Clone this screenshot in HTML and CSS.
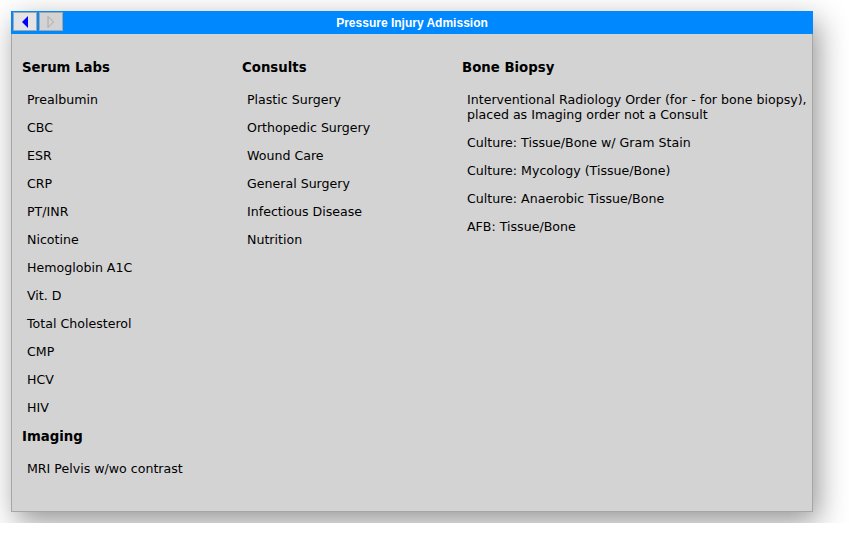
FILE: index.html
```html
<!DOCTYPE html>
<html>
<head>
<meta charset="utf-8">
<link rel="stylesheet" href="styles.css">
</head>
<body>
<div class="window">
  <div class="titlebar">
    <div class="navs">
      <button class="nav back"><svg width="8" height="12" viewBox="0 0 8 12"><path d="M7 0 L1 6 L7 12 Z" fill="#0000ff"/></svg></button>
      <button class="nav fwd"><svg width="8" height="12" viewBox="0 0 8 12"><path d="M1 0.5 L6.5 6 L1 11.5 Z" fill="none" stroke="#a8a8a8" stroke-width="1"/></svg></button>
    </div>
    <div class="title">Pressure Injury Admission</div>
  </div>
  <div class="content">
    <div class="col">
      <h2>Serum Labs</h2>
      <ul>
        <li>Prealbumin</li><li>CBC</li><li>ESR</li><li>CRP</li><li>PT/INR</li><li>Nicotine</li><li>Hemoglobin A1C</li><li>Vit. D</li><li>Total Cholesterol</li><li>CMP</li><li>HCV</li><li>HIV</li>
      </ul>
      <h2 class="sub">Imaging</h2>
      <ul>
        <li>MRI Pelvis w/wo contrast</li>
      </ul>
    </div>
    <div class="col">
      <h2>Consults</h2>
      <ul>
        <li>Plastic Surgery</li><li>Orthopedic Surgery</li><li>Wound Care</li><li>General Surgery</li><li>Infectious Disease</li><li>Nutrition</li>
      </ul>
    </div>
    <div class="col wide">
      <h2>Bone Biopsy</h2>
      <ul>
        <li>Interventional Radiology Order (for - for bone biopsy), placed as Imaging order not a Consult</li>
        <li>Culture: Tissue/Bone w/ Gram Stain</li>
        <li>Culture: Mycology (Tissue/Bone)</li>
        <li>Culture: Anaerobic Tissue/Bone</li>
        <li>AFB: Tissue/Bone</li>
      </ul>
    </div>
  </div>
</div>
</body>
</html>
```
FILE: styles.css
```css
html, body { margin: 0; padding: 0; background: #ffffff; }
body { padding: 11px; font-family: "DejaVu Sans", Verdana, sans-serif; }
.window {
  width: 802px;
  height: 501px;
  box-sizing: border-box;
  background: #d3d3d3;
  border: 1px solid #a6a6a6;
  border-top: none;
  box-shadow: 5px 10px 28px rgba(0,0,0,0.42);
  display: flex;
  flex-direction: column;
}
.titlebar {
  height: 23px;
  background: #0088ff;
  margin: 0 -1px;
  position: relative;
  display: flex;
  align-items: center;
}
.navs { display: flex; gap: 2px; padding-left: 2px; height: 19px; align-self: flex-start; margin-top: 1px; }
.nav {
  width: 24px; height: 19px; margin: 0; padding: 0;
  border: 1px solid #a6a6a6;
  background: #e4e4e4;
  display: flex; align-items: center; justify-content: center;
}
.nav.fwd { background: #d3d3d3; }
.title {
  position: absolute; left: 0; right: 0; top: 0; bottom: 0;
  display: flex; align-items: center; justify-content: center;
  color: #ffffff; font: bold 12px "Liberation Sans", Arial, sans-serif;
  pointer-events: none;
}
.content {
  display: flex;
  padding: 25px 0 0 10px;
}
.col { width: 220px; flex: none; }
.col.wide { flex: 1; width: auto; }
.col.wide li { padding-right: 0; }
h2 {
  margin: 0 0 9px 0;
  font-size: 13.3px;
  line-height: 17px;
  font-weight: bold;
  color: #000;
}
h2.sub { margin-top: 7px; }
ul { list-style: none; margin: 0; padding: 0; }
li {
  padding: 6.5px 5px;
  font-size: 12.6px;
  line-height: 15px;
  color: #000;
}
```
